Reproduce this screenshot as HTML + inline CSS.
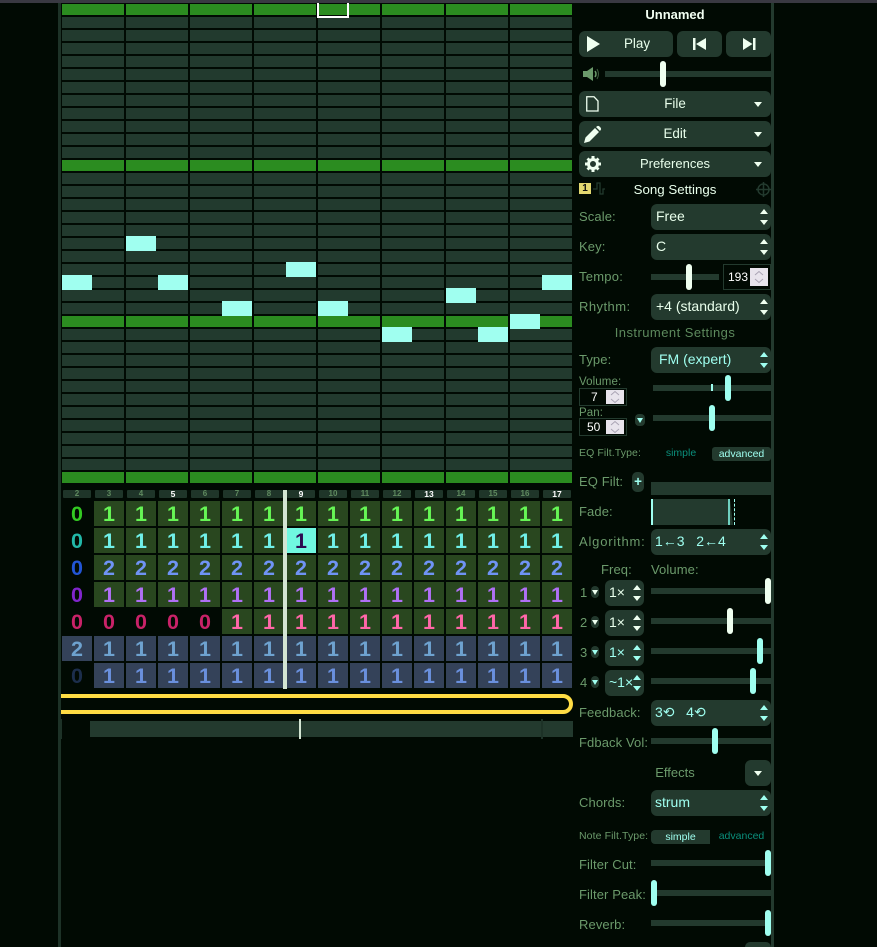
<!DOCTYPE html>
<html><head><meta charset="utf-8"><style>
html,body{margin:0;padding:0;width:877px;height:947px;overflow:hidden;background:#010a03}
body{position:relative;font:13px/16px "Liberation Sans",sans-serif;color:#6b9a6b}
div,span.a,svg{position:absolute}
svg{overflow:visible}
.bar{background:#233a2e}
.btn{background:#233a2e;border-radius:6px;color:#e9ffec;text-align:center;height:26px;line-height:25px;font-size:13.400px}
.sel{background:#233a2e;border-radius:6px;left:651px;width:120px;height:26px;line-height:25px;color:#e9ffec;text-indent:5px;font-size:14px}
.cy{color:#9ffff0}
.lab{left:579px;height:16px;white-space:nowrap;font-size:13px;letter-spacing:.1px;margin-top:1px}
.sm{font-size:10.500px;margin-top:0}
.tr{left:651px;width:120px;height:6px;background:#233a2e}
.th{width:6px;height:26px;border-radius:3px;background:#effff0}
.thc{background:#9ffff0}
.note{width:30px;height:15px;background:#a0fff0}
.ip{left:579px;width:46px;height:16px;border:1px solid #233a2e;color:#fff;font-size:12px;line-height:17px}
.ip b{position:absolute;right:2px;top:1px;width:18px;height:14px;background:#e8e4ec;font-weight:normal}
.ip svg{left:5px;top:1px}
.up{width:0;height:0;border-left:4px solid transparent;border-right:4px solid transparent;border-bottom:5px solid #effff0}
.dn{width:0;height:0;border-left:4px solid transparent;border-right:4px solid transparent;border-top:5px solid #effff0}
.cup{border-bottom-color:#9ffff0}.cdn{border-top-color:#9ffff0}
.mini{width:8px;height:12px;border-radius:4px;background:#233a2e}
.mini i{position:absolute;left:1px;top:4px;width:0;height:0;border-left:3px solid transparent;border-right:3px solid transparent;border-top:5px solid #effff0}
#roll{left:62px;top:4px;width:510px;height:479px;background:linear-gradient(90deg,transparent 62px,#010a03 62px) 0 0/64px 100%,linear-gradient(180deg,transparent 11px,#010a03 11px) 0 0/100% 13px,linear-gradient(180deg,#2b8c20 11px,transparent 11px) 0 0/100% 156px,#223a2e}
#hd{left:63px;top:490px;display:grid;grid-template-columns:repeat(16,28px);column-gap:4px}
#hd span{height:8px;background:#1f3529;font:bold 8px/8px "Liberation Sans",sans-serif;color:#5f8a5f;text-align:center;border-radius:1px}
#hd span.w{color:#fff;font-size:8.500px}
#ch{left:62px;top:501px;display:grid;grid-template-columns:repeat(16,30px);grid-auto-rows:25px;gap:2px;font:bold 21.500px/27px "Liberation Sans",sans-serif;text-align:center}
#ch span{display:block}
.g{background:#29471f}.b{background:#344259}
.r1{color:#66f555}.r2{color:#70f0e8}.r3{color:#6f93f5}.r4{color:#b070f5}.r5{color:#ff66a8}.r6{color:#6ea2cf}.r7{color:#6a90dd}
.z1{color:#33c922}.z2{color:#22b8a8}.z3{color:#2255d5}.z4{color:#8025cc}.z5{color:#c92268}.z7{color:#1c2e4c}
</style></head><body>
<div style="left:0;top:0;width:877px;height:3px;background:#393942"></div>
<div style="left:58px;top:3px;width:3px;height:944px;background:#1d3227"></div>
<div style="left:771px;top:3px;width:3px;height:944px;background:#233a2e"></div>

<div id="roll"></div>
<div class="note" style="left:62px;top:275px"></div>
<div class="note" style="left:126px;top:236px"></div>
<div class="note" style="left:158px;top:275px"></div>
<div class="note" style="left:222px;top:301px"></div>
<div class="note" style="left:286px;top:262px"></div>
<div class="note" style="left:318px;top:301px"></div>
<div class="note" style="left:382px;top:327px"></div>
<div class="note" style="left:446px;top:288px"></div>
<div class="note" style="left:478px;top:327px"></div>
<div class="note" style="left:510px;top:314px"></div>
<div class="note" style="left:542px;top:275px"></div>
<div style="left:317px;top:3px;width:28px;height:13px;border:2px solid #fff;border-top:0"></div>

<div id="hd"><span>2</span><span>3</span><span>4</span><span class="w">5</span><span>6</span><span>7</span><span>8</span><span class="w">9</span><span>10</span><span>11</span><span>12</span><span class="w">13</span><span>14</span><span>15</span><span>16</span><span class="w">17</span></div>

<div id="ch">
<span class="z1">0</span><span class="g r1">1</span><span class="g r1">1</span><span class="g r1">1</span><span class="g r1">1</span><span class="g r1">1</span><span class="g r1">1</span><span class="g r1">1</span><span class="g r1">1</span><span class="g r1">1</span><span class="g r1">1</span><span class="g r1">1</span><span class="g r1">1</span><span class="g r1">1</span><span class="g r1">1</span><span class="g r1">1</span>
<span class="z2">0</span><span class="g r2">1</span><span class="g r2">1</span><span class="g r2">1</span><span class="g r2">1</span><span class="g r2">1</span><span class="g r2">1</span><span style="background:#70f8e0;color:#2c0a50">1</span><span class="g r2">1</span><span class="g r2">1</span><span class="g r2">1</span><span class="g r2">1</span><span class="g r2">1</span><span class="g r2">1</span><span class="g r2">1</span><span class="g r2">1</span>
<span class="z3">0</span><span class="g r3">2</span><span class="g r3">2</span><span class="g r3">2</span><span class="g r3">2</span><span class="g r3">2</span><span class="g r3">2</span><span class="g r3">2</span><span class="g r3">2</span><span class="g r3">2</span><span class="g r3">2</span><span class="g r3">2</span><span class="g r3">2</span><span class="g r3">2</span><span class="g r3">2</span><span class="g r3">2</span>
<span class="z4">0</span><span class="g r4">1</span><span class="g r4">1</span><span class="g r4">1</span><span class="g r4">1</span><span class="g r4">1</span><span class="g r4">1</span><span class="g r4">1</span><span class="g r4">1</span><span class="g r4">1</span><span class="g r4">1</span><span class="g r4">1</span><span class="g r4">1</span><span class="g r4">1</span><span class="g r4">1</span><span class="g r4">1</span>
<span class="z5">0</span><span class="z5">0</span><span class="z5">0</span><span class="z5">0</span><span class="z5">0</span><span class="g r5">1</span><span class="g r5">1</span><span class="g r5">1</span><span class="g r5">1</span><span class="g r5">1</span><span class="g r5">1</span><span class="g r5">1</span><span class="g r5">1</span><span class="g r5">1</span><span class="g r5">1</span><span class="g r5">1</span>
<span class="b r6">2</span><span class="b r6">1</span><span class="b r6">1</span><span class="b r6">1</span><span class="b r6">1</span><span class="b r6">1</span><span class="b r6">1</span><span class="b r6">1</span><span class="b r6">1</span><span class="b r6">1</span><span class="b r6">1</span><span class="b r6">1</span><span class="b r6">1</span><span class="b r6">1</span><span class="b r6">1</span><span class="b r6">1</span>
<span class="z7">0</span><span class="b r7">1</span><span class="b r7">1</span><span class="b r7">1</span><span class="b r7">1</span><span class="b r7">1</span><span class="b r7">1</span><span class="b r7">1</span><span class="b r7">1</span><span class="b r7">1</span><span class="b r7">1</span><span class="b r7">1</span><span class="b r7">1</span><span class="b r7">1</span><span class="b r7">1</span><span class="b r7">1</span>
</div>
<div style="left:283px;top:490px;width:4px;height:199px;background:#d3e5d3"></div>

<div style="left:61px;top:690px;width:516px;height:28px;overflow:hidden"><div style="left:-30px;top:4px;width:534px;height:12px;border:4px solid #ffdd44;border-radius:10px"></div></div>

<div style="left:90px;top:721px;width:483px;height:16px;background:#233a2e"></div>
<div style="left:61px;top:719px;width:1px;height:20px;background:#1d3227"></div>
<div style="left:541px;top:719px;width:2px;height:20px;background:#1d3227"></div>
<div style="left:299px;top:719px;width:2px;height:20px;background:#d3e5d3"></div>

<!-- right panel -->
<div style="left:579px;width:192px;top:7px;text-align:center;color:#f2fff2;font-weight:bold;font-size:13px">Unnamed</div>

<div class="btn" style="left:579px;top:31px;width:94px;text-indent:22px">Play</div>
<svg style="left:587px;top:36px" width="13" height="16"><path d="M0 0L13 8L0 16Z" fill="#effff0"/></svg>
<div class="btn" style="left:677px;top:31px;width:45px"></div>
<svg style="left:693px;top:38px" width="13" height="12"><path d="M0 0h2.500v12H0zM13 0v12L3 6Z" fill="#effff0"/></svg>
<div class="btn" style="left:726px;top:31px;width:45px"></div>
<svg style="left:743px;top:38px" width="13" height="12"><path d="M0 0v12L9.500 6ZM10 0h2.500v12H10z" fill="#effff0"/></svg>

<svg style="left:583px;top:66px" width="18" height="16"><path d="M0 5h4L10 1V15L4 11H0Z" fill="#6b9a6b"/><path d="M12 5Q14 8 12 11" fill="none" stroke="#6b9a6b" stroke-width="1.500"/><path d="M14 3Q17 8 14 13" fill="none" stroke="#6b9a6b" stroke-width="1" opacity=".6"/></svg>
<div class="tr" style="left:605px;top:71px;width:166px"></div>
<div class="th" style="left:660px;top:61px"></div>

<div class="btn" style="left:579px;top:91px;width:192px">File</div>
<svg style="left:586px;top:96px" width="13" height="16"><path d="M.75.75H8L12 5V15H.75Z" fill="none" stroke="#effff0" stroke-width="1.300"/></svg>
<div class="dn" style="left:754px;top:102px"></div>
<div class="btn" style="left:579px;top:121px;width:192px">Edit</div>
<svg style="left:584px;top:126px" width="17" height="17"><path d="M0 17L1.500 11.500L11 2L15 6L5.500 15.500ZM12 1L13.500 0Q14.500-.3 15.500 .5L16.500 1.500Q17.300 2.500 17 3.500L16 5Z" fill="#effff0"/></svg>
<div class="dn" style="left:754px;top:132px"></div>
<div class="btn" style="left:579px;top:151px;width:192px;font-size:13px">Preferences</div>
<svg style="left:585px;top:156px" width="16" height="16"><circle cx="8" cy="8" r="4.500" fill="none" stroke="#effff0" stroke-width="3"/><path d="M6.500 0h3v3h-3zM6.500 13h3v3h-3zM0 6.500h3v3H0zM13 6.500h3v3h-3zM1.500 3.500L3.500 1.500L5.500 3.500L3.500 5.500ZM10.500 3.500L12.500 1.500L14.500 3.500L12.500 5.500ZM1.500 12.500L3.500 10.500L5.500 12.500L3.500 14.500ZM10.500 12.500L12.500 10.500L14.500 12.500L12.500 14.500Z" fill="#effff0"/></svg>
<div class="dn" style="left:754px;top:162px"></div>

<div style="left:579px;top:183px;width:12px;height:11px;background:#e3d870;color:#111;font:bold 10px/11px 'Liberation Sans',sans-serif;text-align:center">1</div>
<svg style="left:593px;top:182px" width="12" height="13"><path d="M0 7H4V1H7V12H10V7H12" fill="none" stroke="#233a2e" stroke-width="1.300"/></svg>
<div style="left:579px;width:192px;top:182px;text-align:center;color:#e9ffec;font-size:13.300px">Song Settings</div>
<svg style="left:756px;top:182px" width="15" height="15"><circle cx="7.500" cy="7.500" r="5.500" fill="none" stroke="#233a2e" stroke-width="1.500"/><path d="M7.500 0V15M0 7.500H15" stroke="#233a2e" stroke-width="1.500"/></svg>

<div class="lab" style="top:208px">Scale:</div>
<div class="sel" style="top:204px">Free</div>
<div class="up" style="left:760px;top:209px"></div><div class="dn" style="left:760px;top:220px"></div>
<div class="lab" style="top:238px">Key:</div>
<div class="sel" style="top:234px">C</div>
<div class="up" style="left:760px;top:239px"></div><div class="dn" style="left:760px;top:250px"></div>
<div class="lab" style="top:268px;letter-spacing:.25px">Tempo:</div>
<div class="tr" style="top:274px;width:68px"></div>
<div class="th" style="left:686px;top:264px"></div>
<div class="ip" style="left:723px;top:264px;height:24px;line-height:24px;text-indent:4px">193<b style="top:3px;height:18px"><svg style="top:3px" width="8" height="12"><path d="M0 4L4 .5L8 4M0 8L4 11.500L8 8" fill="none" stroke="#aaa4b4" stroke-width="1"/></svg></b></div>
<div class="lab" style="top:298px;letter-spacing:.45px">Rhythm:</div>
<div class="sel" style="top:294px">+4 (standard)</div>
<div class="up" style="left:760px;top:299px"></div><div class="dn" style="left:760px;top:310px"></div>

<div style="left:579px;width:192px;top:325px;text-align:center;font-size:13px;letter-spacing:.45px;color:#5d8a5d">Instrument Settings</div>

<div class="lab" style="top:351px">Type:</div>
<div class="sel cy" style="top:347px;text-indent:8px">FM (expert)</div>
<div class="up cup" style="left:760px;top:352px"></div><div class="dn cdn" style="left:760px;top:363px"></div>

<div class="lab" style="top:373px;font-size:11.500px">Volume:</div>
<div class="ip" style="top:388px;text-indent:11px">7<b><svg width="8" height="12"><path d="M0 4L4 .5L8 4M0 8L4 11.500L8 8" fill="none" stroke="#aaa4b4" stroke-width="1"/></svg></b></div>
<div class="tr" style="left:653px;top:385px;width:118px"></div>
<div style="left:711px;top:384px;width:2px;height:7px;background:#9ffff0"></div>
<div class="th thc" style="left:725px;top:375px"></div>
<div class="lab" style="top:404px;font-size:11.500px">Pan:</div>
<div class="ip" style="top:418px;text-indent:7px">50<b><svg width="8" height="12"><path d="M0 4L4 .5L8 4M0 8L4 11.500L8 8" fill="none" stroke="#aaa4b4" stroke-width="1"/></svg></b></div>
<div class="mini" style="left:635px;top:414px;width:10px"><i style="left:2px;border-top-color:#9ffff0"></i></div>
<div class="tr" style="left:653px;top:415px;width:118px"></div>
<div class="th thc" style="left:709px;top:405px"></div>

<div class="lab sm" style="top:445px">EQ Filt.Type:</div>
<div style="left:651px;width:60px;top:445px;text-align:center;font-size:10.500px;color:#0b8f7c">simple</div>
<div style="left:712px;width:59px;top:447px;height:14px;background:#233a2e;border-radius:3px;line-height:14px;text-align:center;font-size:10.500px;color:#9ffff0">advanced</div>

<div class="lab" style="top:473px">EQ Filt:</div>
<div class="btn" style="left:632px;top:472px;width:12px;height:20px;line-height:20px;color:#9ffff0;font-weight:bold;border-radius:5px">+</div>
<div style="left:651px;top:482px;width:120px;height:13px;background:#233a2e"></div>

<div class="lab" style="top:503px">Fade:</div>
<div style="left:651px;top:499px;width:78px;height:26px;background:#233a2e"></div>
<div style="left:651px;top:499px;width:2px;height:26px;background:#9ffff0"></div>
<div style="left:728px;top:499px;width:2px;height:26px;background:#6fd0c0"></div>
<svg style="left:730px;top:499px" width="4" height="26"><path d="M0 0L3 26H0Z" fill="#233a2e"/></svg>
<div style="left:734px;top:499px;width:0;height:26px;border-left:1px dashed #9ffff0"></div>

<div class="lab" style="top:533px;letter-spacing:.8px">Algorithm:</div>
<div class="sel cy" style="top:529px;text-indent:4px">1←3&nbsp;&nbsp;&nbsp;2←4</div>
<div class="up cup" style="left:760px;top:534px"></div><div class="dn cdn" style="left:760px;top:545px"></div>

<div class="lab" style="left:601px;top:561px">Freq:</div>
<div class="lab" style="left:651px;top:561px">Volume:</div>

<div class="lab" style="left:580px;top:584px">1</div><div class="mini" style="left:591px;top:586px"><i></i></div>
<div class="sel" style="left:605px;width:39px;top:580px;text-indent:4px">1×</div>
<div class="up" style="left:633px;top:585px"></div><div class="dn" style="left:633px;top:596px"></div>
<div class="tr" style="top:588px"></div><div class="th" style="left:765px;top:578px"></div>

<div class="lab" style="left:580px;top:614px">2</div><div class="mini" style="left:591px;top:616px"><i></i></div>
<div class="sel" style="left:605px;width:39px;top:610px;text-indent:4px">1×</div>
<div class="up" style="left:633px;top:615px"></div><div class="dn" style="left:633px;top:626px"></div>
<div class="tr" style="top:618px"></div><div class="th" style="left:727px;top:608px"></div>

<div class="lab" style="left:580px;top:644px">3</div><div class="mini" style="left:591px;top:646px"><i style="border-top-color:#9ffff0"></i></div>
<div class="sel cy" style="left:605px;width:39px;top:640px;text-indent:4px">1×</div>
<div class="up cup" style="left:633px;top:645px"></div><div class="dn cdn" style="left:633px;top:656px"></div>
<div class="tr" style="top:648px"></div><div class="th thc" style="left:757px;top:638px"></div>

<div class="lab" style="left:580px;top:674px">4</div><div class="mini" style="left:591px;top:676px"><i style="border-top-color:#9ffff0"></i></div>
<div class="sel cy" style="left:605px;width:39px;top:670px;text-indent:4px">~1×</div>
<div class="up cup" style="left:633px;top:675px"></div><div class="dn cdn" style="left:633px;top:686px"></div>
<div class="tr" style="top:678px"></div><div class="th thc" style="left:750px;top:668px"></div>

<div class="lab" style="top:704px">Feedback:</div>
<div class="sel cy" style="top:700px;text-indent:4px">3⟲&nbsp;&nbsp;&nbsp;4⟲</div>
<div class="up cup" style="left:760px;top:705px"></div><div class="dn cdn" style="left:760px;top:716px"></div>

<div class="lab" style="top:734px">Fdback Vol:</div>
<div class="tr" style="top:738px"></div><div class="th thc" style="left:712px;top:728px"></div>

<div style="left:579px;width:192px;top:765px;text-align:center;font-size:13px">Effects</div>
<div class="btn" style="left:745px;top:760px;width:26px"></div><div class="dn" style="left:754px;top:771px"></div>

<div class="lab" style="top:794px">Chords:</div>
<div class="sel cy" style="top:790px;text-indent:4px">strum</div>
<div class="up cup" style="left:760px;top:795px"></div><div class="dn cdn" style="left:760px;top:806px"></div>

<div class="lab sm" style="top:828px">Note Filt.Type:</div>
<div style="left:651px;width:59px;top:830px;height:14px;background:#233a2e;border-radius:4px 0 0 4px;line-height:14px;text-align:center;font-size:10.500px;color:#9ffff0">simple</div>
<div style="left:712px;width:59px;top:828px;text-align:center;font-size:10.500px;color:#0b8f7c">advanced</div>

<div class="lab" style="top:856px">Filter Cut:</div>
<div class="tr" style="top:860px"></div><div class="th thc" style="left:765px;top:850px"></div>
<div class="lab" style="top:886px">Filter Peak:</div>
<div class="tr" style="top:890px"></div><div class="th thc" style="left:651px;top:880px"></div>
<div class="lab" style="top:916px">Reverb:</div>
<div class="tr" style="top:920px"></div><div class="th thc" style="left:765px;top:910px"></div>
<div style="left:745px;top:942px;width:26px;height:5px;background:#233a2e;border-radius:6px 6px 0 0"></div>
</body></html>
